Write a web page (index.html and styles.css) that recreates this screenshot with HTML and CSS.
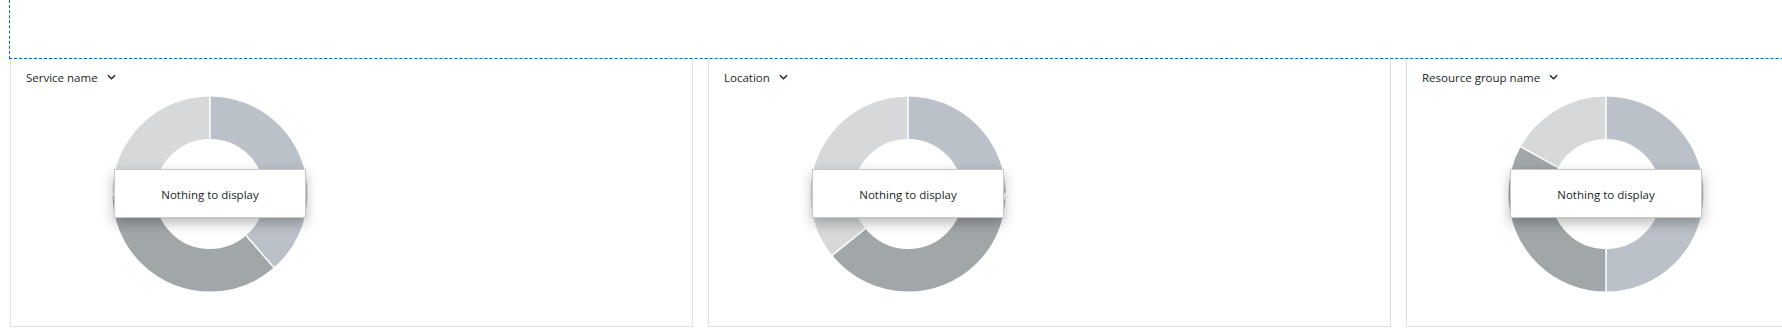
FILE: index.html
```html
<!DOCTYPE html>
<html lang="en">
<head>
  <meta charset="UTF-8" />
  <title>Cost breakdown</title>
  <link rel="stylesheet" href="styles.css">
</head>
<body>
  <div class="page">
    <div class="focus-zone"></div>

    <div class="tiles">
      <section class="tile">
        <div class="tile-head">
          <span>Service name</span>
          <svg class="chevron" viewBox="0 0 10 6"><path d="M1 1l4 4 4-4" /></svg>
        </div>
        <div class="chart">
          <svg class="donut" viewBox="0 0 196 196">
            <g class="ring" transform="rotate(-90 98 98)">
              <circle class="seg-blue" cx="98" cy="98" r="76.25" pathLength="360" stroke-dasharray="139 360" />
              <circle class="seg-dark" cx="98" cy="98" r="76.25" pathLength="360" stroke-dasharray="131 360" stroke-dashoffset="-139" />
              <circle class="seg-light" cx="98" cy="98" r="76.25" pathLength="360" stroke-dasharray="90 360" stroke-dashoffset="-270" />
            </g>
            <g class="cuts">
              <line x1="98" y1="43" x2="98" y2="0" />
              <line x1="98" y1="43" x2="98" y2="0" transform="rotate(139 98 98)" />
              <line x1="98" y1="43" x2="98" y2="0" transform="rotate(270 98 98)" />
            </g>
          </svg>
          <div class="empty-msg">Nothing to display</div>
        </div>
      </section>

      <section class="tile">
        <div class="tile-head">
          <span>Location</span>
          <svg class="chevron" viewBox="0 0 10 6"><path d="M1 1l4 4 4-4" /></svg>
        </div>
        <div class="chart">
          <svg class="donut" viewBox="0 0 196 196">
            <g class="ring" transform="rotate(-90 98 98)">
              <circle class="seg-blue" cx="98" cy="98" r="76.25" pathLength="360" stroke-dasharray="90 360" />
              <circle class="seg-dark" cx="98" cy="98" r="76.25" pathLength="360" stroke-dasharray="141 360" stroke-dashoffset="-90" />
              <circle class="seg-light" cx="98" cy="98" r="76.25" pathLength="360" stroke-dasharray="129 360" stroke-dashoffset="-231" />
            </g>
            <g class="cuts">
              <line x1="98" y1="43" x2="98" y2="0" />
              <line x1="98" y1="43" x2="98" y2="0" transform="rotate(90 98 98)" />
              <line x1="98" y1="43" x2="98" y2="0" transform="rotate(231 98 98)" />
            </g>
          </svg>
          <div class="empty-msg">Nothing to display</div>
        </div>
      </section>

      <section class="tile">
        <div class="tile-head">
          <span>Resource group name</span>
          <svg class="chevron" viewBox="0 0 10 6"><path d="M1 1l4 4 4-4" /></svg>
        </div>
        <div class="chart">
          <svg class="donut" viewBox="0 0 196 196">
            <g class="ring" transform="rotate(-90 98 98)">
              <circle class="seg-blue" cx="98" cy="98" r="76.25" pathLength="360" stroke-dasharray="180 360" />
              <circle class="seg-dark" cx="98" cy="98" r="76.25" pathLength="360" stroke-dasharray="119 360" stroke-dashoffset="-180" />
              <circle class="seg-light" cx="98" cy="98" r="76.25" pathLength="360" stroke-dasharray="61 360" stroke-dashoffset="-299" />
            </g>
            <g class="cuts">
              <line x1="98" y1="43" x2="98" y2="0" />
              <line x1="98" y1="43" x2="98" y2="0" transform="rotate(180 98 98)" />
              <line x1="98" y1="43" x2="98" y2="0" transform="rotate(299 98 98)" />
            </g>
          </svg>
          <div class="empty-msg">Nothing to display</div>
        </div>
      </section>
    </div>
  </div>
</body>
</html>
```

FILE: styles.css
```css
body {
  margin: 0;
  font-family: 'Open Sans', 'Liberation Sans', sans-serif;
  color: #201f1e;
  background: #fff;
  overflow: hidden;
}

.page {
  padding-left: 9px;
  width: 2200px;
}

.focus-zone {
  height: 58px;
  border-left: 1px dashed #0063d3;
  border-bottom: 1px dashed #0063d3;
}

.tiles {
  display: flex;
  gap: 15px;
  padding-left: 1px;
}

.tile {
  width: 683px;
  height: 268px;
  box-sizing: border-box;
  border: 1px solid #e1e1e1;
  border-top: none;
  padding: 8px 14px 0;
}

.tile-head {
  display: flex;
  align-items: center;
  gap: 9px;
  height: 20px;
  padding-left: 1px;
  font-size: 11.5px;
}

.chevron {
  width: 9px;
  height: 6px;
  fill: none;
  stroke: #201f1e;
  stroke-width: 1.5;
}

.chart {
  position: relative;
  width: 370px;
  margin-top: 9px;
  display: flex;
  justify-content: center;
}

.donut {
  width: 196px;
  height: 196px;
  display: block;
}

.ring circle {
  fill: none;
  stroke-width: 42.5;
}

.seg-blue {
  stroke: #bbc1c8;
}

.seg-dark {
  stroke: #a1a6a9;
}

.seg-light {
  stroke: #d6d8da;
}

.cuts line {
  stroke: #fff;
  stroke-width: 1.5;
}

/* overlay sits on top of the empty donut */
.empty-msg {
  position: absolute;
  left: 89px;
  top: 73px;
  width: 192px;
  height: 49px;
  box-sizing: border-box;
  padding-top: 2px;
  background: #fff;
  border: 1px solid #c8c8c8;
  box-shadow: 0 5px 12px rgba(0, 0, 0, 0.28);
  display: flex;
  align-items: center;
  justify-content: center;
  font-size: 11.5px;
  color: #201f1e;
}
```
